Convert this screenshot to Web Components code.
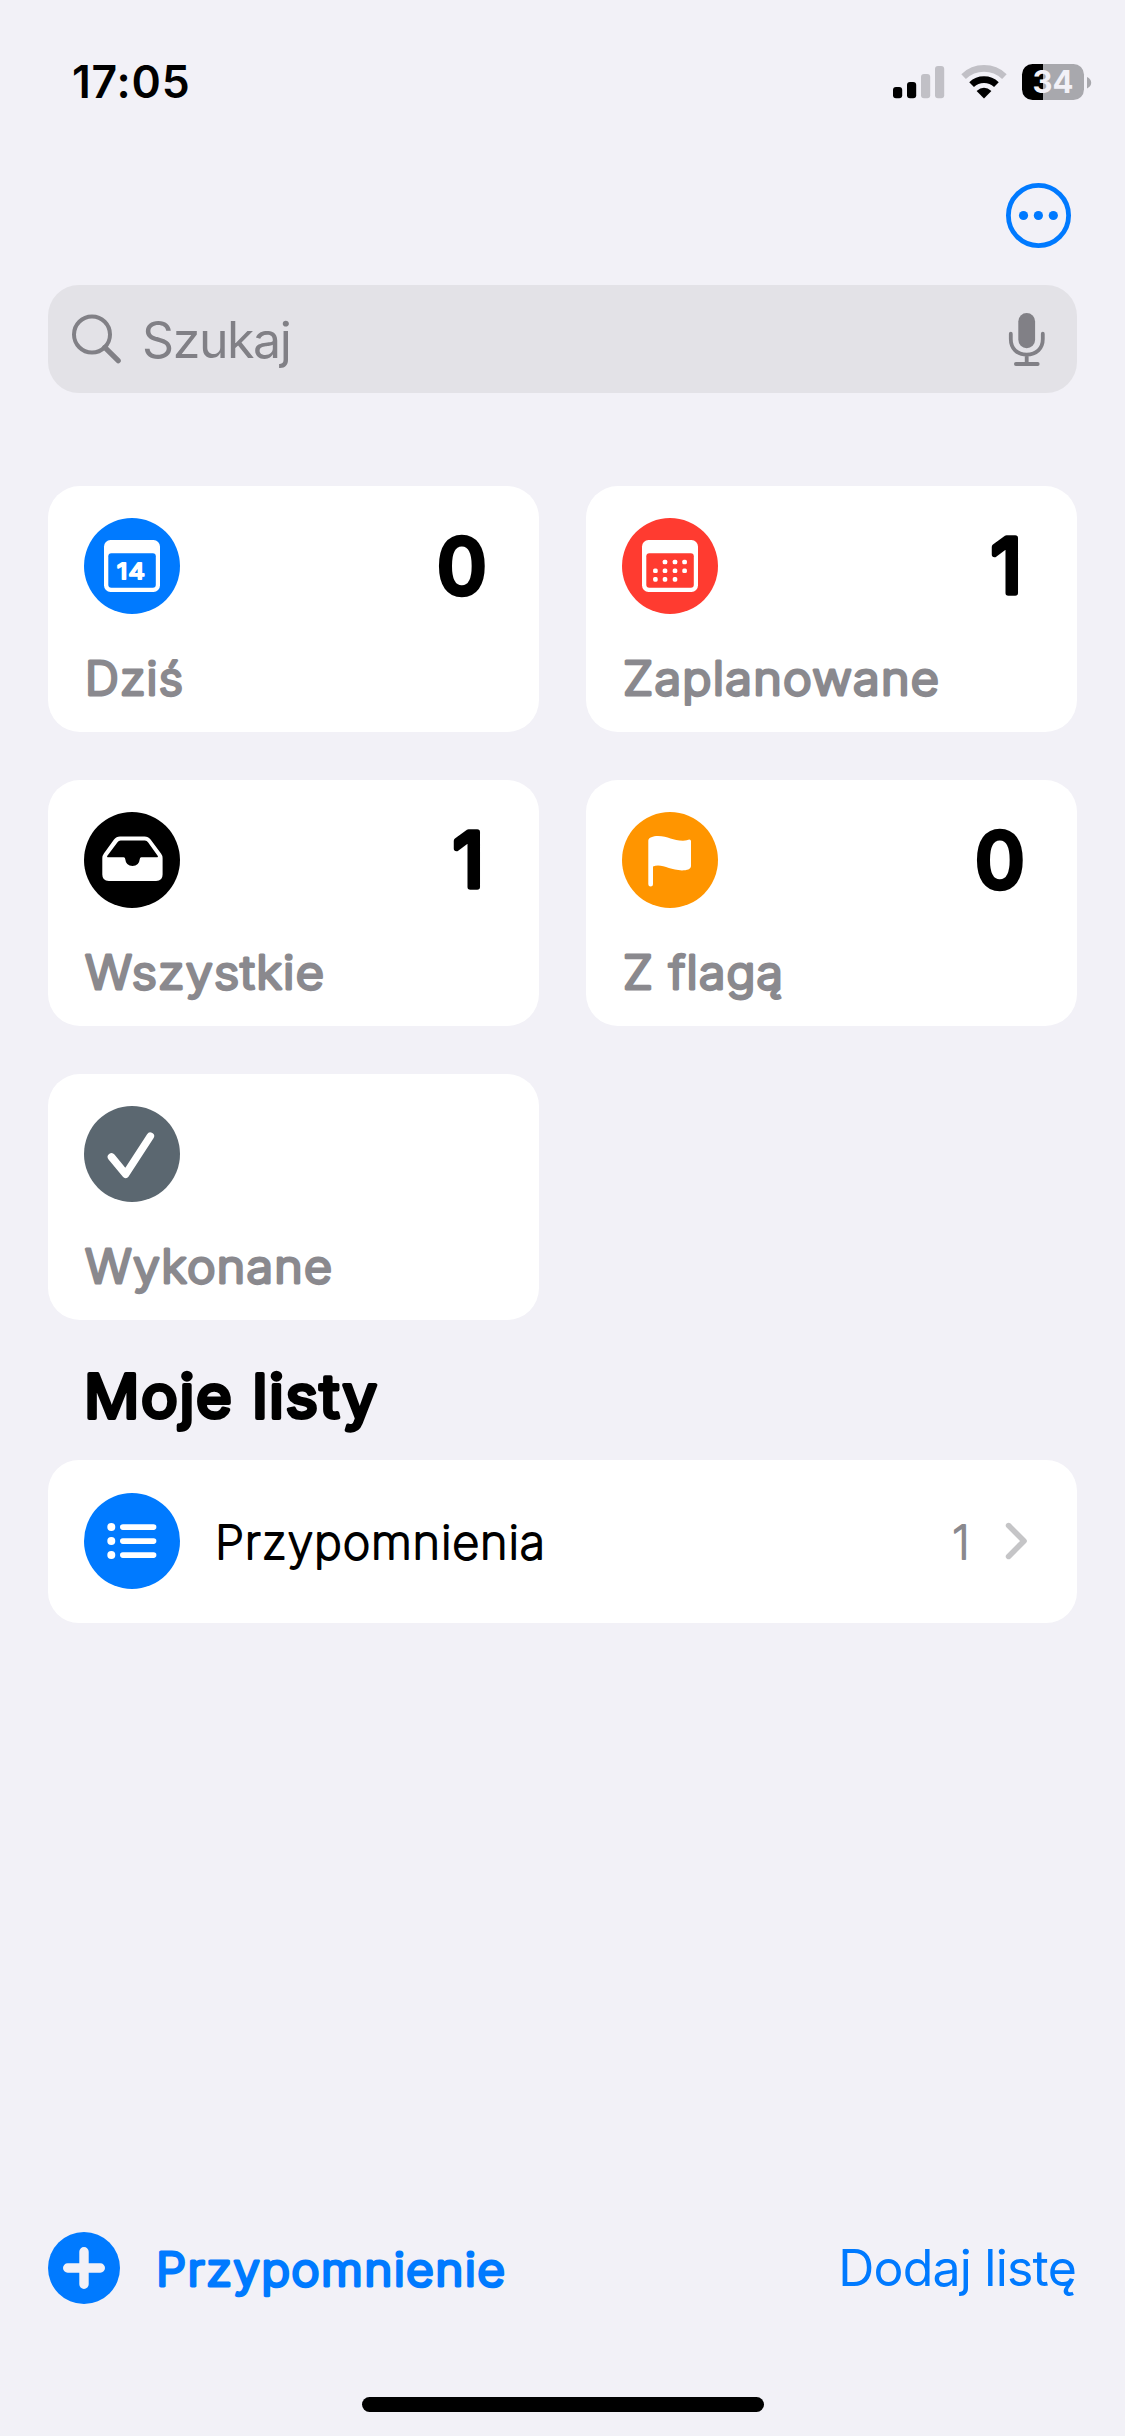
<!DOCTYPE html>
<html lang="pl">
<head>
<meta charset="utf-8">
<title>Przypomnienia</title>
<style>
html, body { margin: 0; background: #f2f1f7; }
body { width: 1125px; height: 2436px; overflow: hidden; font-family: Inter, "Liberation Sans", sans-serif; color: #000; }
</style>
</head>
<body>
<reminders-app></reminders-app>
<script>
const define = (name, html, setup) => {
  const tpl = document.createElement('template');
  tpl.innerHTML = html;
  customElements.define(name, class extends HTMLElement {
    constructor() {
      super();
      this.attachShadow({ mode: 'open' }).appendChild(tpl.content.cloneNode(true));
    }
    connectedCallback() { if (setup) setup(this, this.shadowRoot); }
  });
};

/* Text with rounded terminals: a light weight thickened by a round-joined stroke. */
define('rounded-text', `
<style>
:host { display: block; flex: none; }
svg { display: block; overflow: visible; }
text { fill: currentColor; stroke: currentColor; stroke-linejoin: round; stroke-linecap: round; }
</style>
<svg><text></text></svg>`, (el, root) => {
  const size = +el.getAttribute('size'), stroke = +el.getAttribute('stroke');
  const svg = root.querySelector('svg'), t = root.querySelector('text');
  const len = +el.getAttribute('length');
  svg.setAttribute('width', len);
  svg.setAttribute('height', Math.round(size * 1.2));
  t.setAttribute('y', size);
  t.setAttribute('font-size', size);
  t.setAttribute('font-weight', el.getAttribute('weight'));
  t.setAttribute('stroke-width', stroke);
  if (el.getAttribute('text').length > 1) {
    t.setAttribute('letter-spacing', stroke * .4);
    t.setAttribute('textLength', len + stroke * .4);
    t.setAttribute('lengthAdjust', 'spacingAndGlyphs');
  }
  t.textContent = el.getAttribute('text');
});

const glyphs = {
  today: `<rect x="20" y="22" width="56" height="52" rx="6.5" fill="#fff"/><rect x="24.3" y="35.2" width="47.5" height="34.5" rx="3" fill="var(--tint)"/>
    <text x="47.6" y="61" text-anchor="middle" textLength="29" letter-spacing="1" lengthAdjust="spacingAndGlyphs" font-size="22" font-weight="400" fill="#fff" stroke="#fff" stroke-width="1.9" stroke-linejoin="round">14</text>`,
  scheduled: `<rect x="20" y="22" width="56" height="52" rx="6.5" fill="#fff"/><rect x="24.3" y="35.2" width="47.5" height="34.5" rx="3" fill="var(--tint)"/>
    <g fill="#fff">${[[43,44],[53,44],[62.6,44],[33.4,52.7],[43,52.7],[53,52.7],[62.6,52.7],[33.4,61.4],[43,61.4],[53,61.4]].map(([x,y]) => `<rect x="${x-2.3}" y="${y-2.3}" width="4.6" height="4.6" rx="1.6"/>`).join('')}</g>`,
  all: `<path fill="#fff" fill-rule="evenodd" d="M36 24.5H60.5Q64.3 24.5 66.6 27.6L77 41.6Q78.6 43.8 78.6 46V62.5Q78.6 69 72.1 69H24.8Q18.3 69 18.3 62.5V46Q18.3 43.8 19.9 41.6L30 27.6Q32.3 24.5 36 24.5ZM36.6 28.6Q34.6 28.6 33.5 30.2L23.2 44Q22.6 45.3 23.8 45.3H39.6Q41.2 45.3 41.2 47Q42 54 48.5 54Q55 54 55.8 47Q55.8 45.3 57.4 45.3H73.2Q74.4 45.3 73.8 44L64 30.2Q62.9 28.6 60.9 28.6Z"/>`,
  flagged: `<path fill="#fff" d="M26.3 28.5C26.5 25.5 31 23.9 36 23.9C46 23.9 51 28.7 61 28.7C64 28.7 66 27.4 67.4 27.4Q69 27.4 69 29.2V54C69 57.2 65 58.4 60 58.4C50 58.4 43 53.6 36 53.6Q33.2 53.6 31 54.6V72.3Q31 74.6 28.7 74.6Q26.3 74.6 26.3 72.3Z"/>`,
  done: `<path d="M27.5 51L41.6 68.2L66.3 30.3" fill="none" stroke="#fff" stroke-width="7.6" stroke-linecap="round" stroke-linejoin="round"/>`,
  list: `<g fill="#fff"><circle cx="27.3" cy="34" r="4"/><circle cx="27.3" cy="48" r="4"/><circle cx="27.3" cy="62" r="4"/>
    <rect x="36" y="31.3" width="36.4" height="5.6" rx="2.8"/><rect x="36" y="45.3" width="36.4" height="5.6" rx="2.8"/><rect x="36" y="59.3" width="36.4" height="5.6" rx="2.8"/></g>`
};

define('round-icon', `
<style>
:host { display: block; flex: none; width: 96px; height: 96px; border-radius: 50%; background: var(--tint); }
svg { display: block; }
</style>
<svg width="96" height="96" viewBox="0 0 96 96"></svg>`, (el, root) => {
  el.style.setProperty('--tint', el.getAttribute('tint'));
  root.querySelector('svg').innerHTML = glyphs[el.getAttribute('glyph')];
});

define('status-bar', `
<style>
:host { display: flex; justify-content: space-between; align-items: flex-start; height: 183px; padding: 0 33px 0 72px; box-sizing: border-box; }
.time { font-size: 44.5px; font-weight: 600; line-height: 56px; padding-top: 54px; letter-spacing: .8px; }
.right { display: flex; align-items: flex-start; padding-top: 64px; }
.signal { margin-right: 16px; } .wifi { margin-right: 15px; }
.battery { width: 62px; height: 36px; border-radius: 10.5px; display: flex; align-items: center; justify-content: center;
  background: linear-gradient(90deg, #000 21px, #a8a8ad 21px); color: #f2f1f7; font-size: 31px; font-weight: 700; line-height: 36px; }
.tip { margin: 12.5px 0 0 3px; }
svg { display: block; }
</style>
<div class="time">17:05</div>
<div class="right">
  <svg class="signal" width="52" height="36" viewBox="0 0 52 36">
    <rect x="0" y="23" width="9.2" height="11.2" rx="3"/><rect x="14" y="18" width="9.2" height="16.2" rx="3"/>
    <rect x="28" y="10" width="9.2" height="24.2" rx="3" fill="#c1c0c6"/><rect x="42" y="2" width="9.2" height="32.2" rx="3" fill="#c1c0c6"/>
  </svg>
  <svg class="wifi" width="46" height="36" viewBox="0 0 46 36" fill="none">
    <path d="M2.6 12.6A29.5 29.5 0 0 1 43.4 12.6" stroke="#c1c0c6" stroke-width="6.6"/>
    <path d="M10.6 20.6A18 18 0 0 1 35.4 20.6" stroke="#000" stroke-width="6.8"/>
    <path d="M23 34.4L15.6 27Q23 20.6 30.4 27Z" fill="#000"/>
  </svg>
  <div class="battery">34</div>
  <svg class="tip" width="5" height="12" viewBox="0 0 5 12"><path d="M0 0Q4.2 2 4.2 5.7Q4.2 9.4 0 11.4Z" fill="#a8a8ad"/></svg>
</div>`);

define('nav-bar', `
<style>
:host { display: flex; justify-content: flex-end; height: 102px; padding-right: 54px; }
svg { display: block; }
</style>
<svg width="65" height="65" viewBox="0 0 65 65" fill="#007aff">
  <circle cx="32.5" cy="32.5" r="30.1" fill="none" stroke="#007aff" stroke-width="4.8"/>
  <circle cx="17.5" cy="32.5" r="4.6"/><circle cx="32.4" cy="32.5" r="4.6"/><circle cx="47.3" cy="32.5" r="4.6"/>
</svg>`);

define('search-field', `
<style>
:host { display: flex; align-items: center; height: 108px; margin: 0 48px; padding: 0 31px 0 24px; border-radius: 31px; background: #e3e2e7; color: #818086; box-sizing: border-box; }
span { flex: 1; margin: 1px 0 0 20px; font-size: 50px; line-height: 60px; letter-spacing: -1.4px; }
svg { display: block; }
</style>
<svg width="50" height="50" viewBox="0 0 50 50" fill="none" stroke="currentColor" stroke-linecap="round">
  <circle cx="20" cy="20.5" r="18" stroke-width="4"/><path d="M32.8 33.4L46.2 46.7" stroke-width="5.2"/>
</svg>
<span><slot></slot></span>
<svg width="38" height="56" viewBox="0 0 38 56" fill="none" stroke="currentColor" stroke-linecap="round">
  <rect x="10.3" y="2" width="16.8" height="35.2" rx="8.4" fill="currentColor" stroke="none"/>
  <path d="M2.8 22.7V28C2.8 37.5 9 43.6 18.7 43.6C28.4 43.6 34.8 37.5 34.8 28V22.7M18.7 43.6V52.6M7.9 53H29.7" stroke-width="3.8"/>
</svg>`);

define('summary-card', `
<style>
:host { display: flex; flex-direction: column; justify-content: space-between; height: 246px; padding: 32px 36px 28px; box-sizing: border-box; border-radius: 32px; background: #fff; }
.top { display: flex; justify-content: space-between; align-items: flex-start; height: 96px; }
.label { color: #8a898e; margin-left: 1px; }
</style>
<div class="top"><slot name="icon"></slot><slot name="count"></slot></div>
<div class="label"><slot></slot></div>`);

define('summary-grid', `
<style>
:host { display: grid; grid-template-columns: 491px 491px; gap: 48px 47px; padding: 0 48px; margin-top: 93px; }
rounded-text[slot=count] { margin-top: -1px; }
</style>
<summary-card><round-icon slot="icon" glyph="today" tint="#007aff"></round-icon><rounded-text slot="count" text="0" size="77" weight="500" stroke="4.6" length="66"></rounded-text><rounded-text text="Dziś" size="46" weight="300" stroke="2.9" length="98"></rounded-text></summary-card>
<summary-card><round-icon slot="icon" glyph="scheduled" tint="#ff3b30"></round-icon><rounded-text slot="count" text="1" size="76" weight="400" stroke="5.6" length="50"></rounded-text><rounded-text text="Zaplanowane" size="46" weight="300" stroke="2.9" length="316"></rounded-text></summary-card>
<summary-card><round-icon slot="icon" glyph="all" tint="#000"></round-icon><rounded-text slot="count" text="1" size="76" weight="400" stroke="5.6" length="50"></rounded-text><rounded-text text="Wszystkie" size="46" weight="300" stroke="2.9" length="239"></rounded-text></summary-card>
<summary-card><round-icon slot="icon" glyph="flagged" tint="#ff9500"></round-icon><rounded-text slot="count" text="0" size="77" weight="500" stroke="4.6" length="66"></rounded-text><rounded-text text="Z flagą" size="46" weight="300" stroke="2.9" length="160"></rounded-text></summary-card>
<summary-card><round-icon slot="icon" glyph="done" tint="#5b6770"></round-icon><rounded-text text="Wykonane" size="46" weight="300" stroke="2.9" length="247"></rounded-text></summary-card>`);

define('list-row', `
<style>
:host { display: flex; align-items: center; height: 163px; margin: 0 48px; padding: 0 49px 1px 36px; box-sizing: border-box; border-radius: 31px; background: #fff; }
.name { flex: 1; margin: 0 0 2px 35px; }
.count { color: #8a898e; margin: 0 30px 2px 0; }
svg { display: block; }
</style>
<slot name="icon"></slot>
<div class="name"><slot></slot></div>
<div class="count"><slot name="count"></slot></div>
<svg width="24" height="40" viewBox="0 0 24 40"><path d="M4.6 4.6L20 20L4.6 35.4" fill="none" stroke="#c5c5c7" stroke-width="5.6" stroke-linecap="round" stroke-linejoin="round"/></svg>`);

define('bottom-bar', `
<style>
:host { display: flex; align-items: center; justify-content: space-between; height: 72px; padding: 0 48px; margin-top: auto; color: #007aff; }
.new { display: flex; align-items: center; gap: 36px; }
.new rounded-text { margin-bottom: 2px; }
.add { font-size: 50px; line-height: 60px; letter-spacing: -.8px; margin-right: 1px; }
svg { display: block; }
</style>
<div class="new">
  <svg width="72" height="72" viewBox="0 0 72 72"><circle cx="36" cy="36" r="36" fill="#007aff"/><path d="M36 19.7V52.3M19.7 36H52.3" stroke="#f2f1f7" stroke-width="9.4" stroke-linecap="round"/></svg>
  <rounded-text text="Przypomnienie" size="46" weight="300" stroke="3.1" length="349"></rounded-text>
</div>
<div class="add">Dodaj listę</div>`);

define('home-indicator', `
<style>:host { display: block; width: 402px; height: 15px; border-radius: 8px; background: #000; margin: 93px auto 24px; flex: none; }</style>`);

define('reminders-app', `
<style>
:host { display: flex; flex-direction: column; width: 1125px; height: 2436px; }
.heading { height: 140px; padding: 38px 0 0 84px; box-sizing: border-box; }
</style>
<status-bar></status-bar>
<nav-bar></nav-bar>
<search-field>Szukaj</search-field>
<summary-grid></summary-grid>
<div class="heading"><rounded-text text="Moje listy" size="60" weight="400" stroke="4" length="293"></rounded-text></div>
<list-row>
  <round-icon slot="icon" glyph="list" tint="#007aff"></round-icon>
  <rounded-text text="Przypomnienia" size="47" weight="200" stroke="2" length="330"></rounded-text>
  <rounded-text slot="count" text="1" size="47" weight="200" stroke="2" length="22"></rounded-text>
</list-row>
<bottom-bar></bottom-bar>
<home-indicator></home-indicator>`);
</script>
</body>
</html>
